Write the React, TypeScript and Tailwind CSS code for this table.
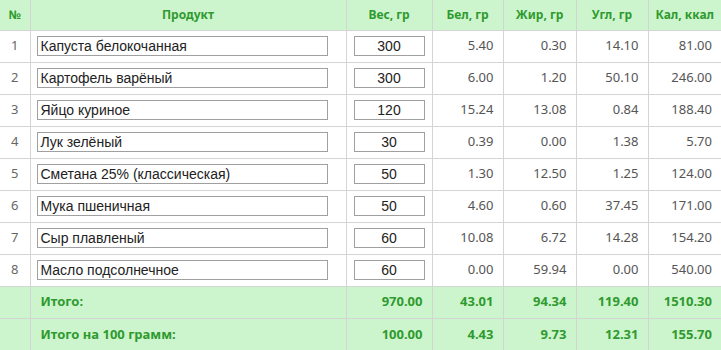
import React from 'react';

const rows = [
  { name: 'Капуста белокочанная', w: 300, b: '5.40', f: '0.30', u: '14.10', k: '81.00' },
  { name: 'Картофель варёный', w: 300, b: '6.00', f: '1.20', u: '50.10', k: '246.00' },
  { name: 'Яйцо куриное', w: 120, b: '15.24', f: '13.08', u: '0.84', k: '188.40' },
  { name: 'Лук зелёный', w: 30, b: '0.39', f: '0.00', u: '1.38', k: '5.70' },
  { name: 'Сметана 25% (классическая)', w: 50, b: '1.30', f: '12.50', u: '1.25', k: '124.00' },
  { name: 'Мука пшеничная', w: 50, b: '4.60', f: '0.60', u: '37.45', k: '171.00' },
  { name: 'Сыр плавленый', w: 60, b: '10.08', f: '6.72', u: '14.28', k: '154.20' },
  { name: 'Масло подсолнечное', w: 60, b: '0.00', f: '59.94', u: '0.00', k: '540.00' },
];

const totals = [
  { label: 'Итого:', w: '970.00', b: '43.01', f: '94.34', u: '119.40', k: '1510.30' },
  { label: 'Итого на 100 грамм:', w: '100.00', b: '4.43', f: '9.73', u: '12.31', k: '155.70' },
];

const cell = 'border border-[#d4d4d4] h-[32px] p-0';
const num = `${cell} text-right pr-[9px]`;
const head = 'border border-[#d4d4d4] border-t-0 h-[30px] p-0 text-center font-bold text-[12px] text-[#2f9a2f]';
const tot = `${cell} text-right pr-[9px] font-bold text-[#2f9a2f]`;
const input = "h-[20px] border border-[#a0a0a0] leading-[18px] text-[#222] text-[14px] font-['Liberation_Sans',Arial,sans-serif] whitespace-nowrap overflow-hidden";

export default function App() {
  return (
    <div className="w-[721px] h-[350px] overflow-hidden bg-white font-['Noto_Sans',sans-serif] text-[13px] text-[#555]">
      <table className="w-[721px] border-collapse table-fixed border-hidden">
        <colgroup>
          <col className="w-[30px]" />
          <col className="w-[316px]" />
          <col className="w-[86px]" />
          <col className="w-[71px]" />
          <col className="w-[73px]" />
          <col className="w-[72px]" />
          <col className="w-[73px]" />
        </colgroup>
        <thead>
          <tr className="bg-[#cdf5cd]">
            <th className={head}>№</th>
            <th className={head}>Продукт</th>
            <th className={head}>Вес, гр</th>
            <th className={head}>Бел, гр</th>
            <th className={head}>Жир, гр</th>
            <th className={head}>Угл, гр</th>
            <th className={head}>Кал, ккал</th>
          </tr>
        </thead>
        <tbody>
          {rows.map((r, i) => (
            <tr key={i}>
              <td className={`${cell} text-center text-[#666]`}>{i + 1}</td>
              <td className={`${cell} pl-[6px]`}>
                <div className={`${input} w-[291px] px-[3px]`}>{r.name}</div>
              </td>
              <td className={`${cell} pl-[7px]`}>
                <div className={`${input} w-[71px] text-center`}>{r.w}</div>
              </td>
              <td className={num}>{r.b}</td>
              <td className={num}>{r.f}</td>
              <td className={num}>{r.u}</td>
              <td className={num}>{r.k}</td>
            </tr>
          ))}
          {totals.map((t, i) => (
            <tr key={i} className="bg-[#cdf5cd]">
              <td className={cell}></td>
              <td className={`${cell} pl-[10px] font-bold text-[#2f9a2f]`}>{t.label}</td>
              <td className={tot}>{t.w}</td>
              <td className={tot}>{t.b}</td>
              <td className={tot}>{t.f}</td>
              <td className={tot}>{t.u}</td>
              <td className={tot}>{t.k}</td>
            </tr>
          ))}
        </tbody>
      </table>
    </div>
  );
}
